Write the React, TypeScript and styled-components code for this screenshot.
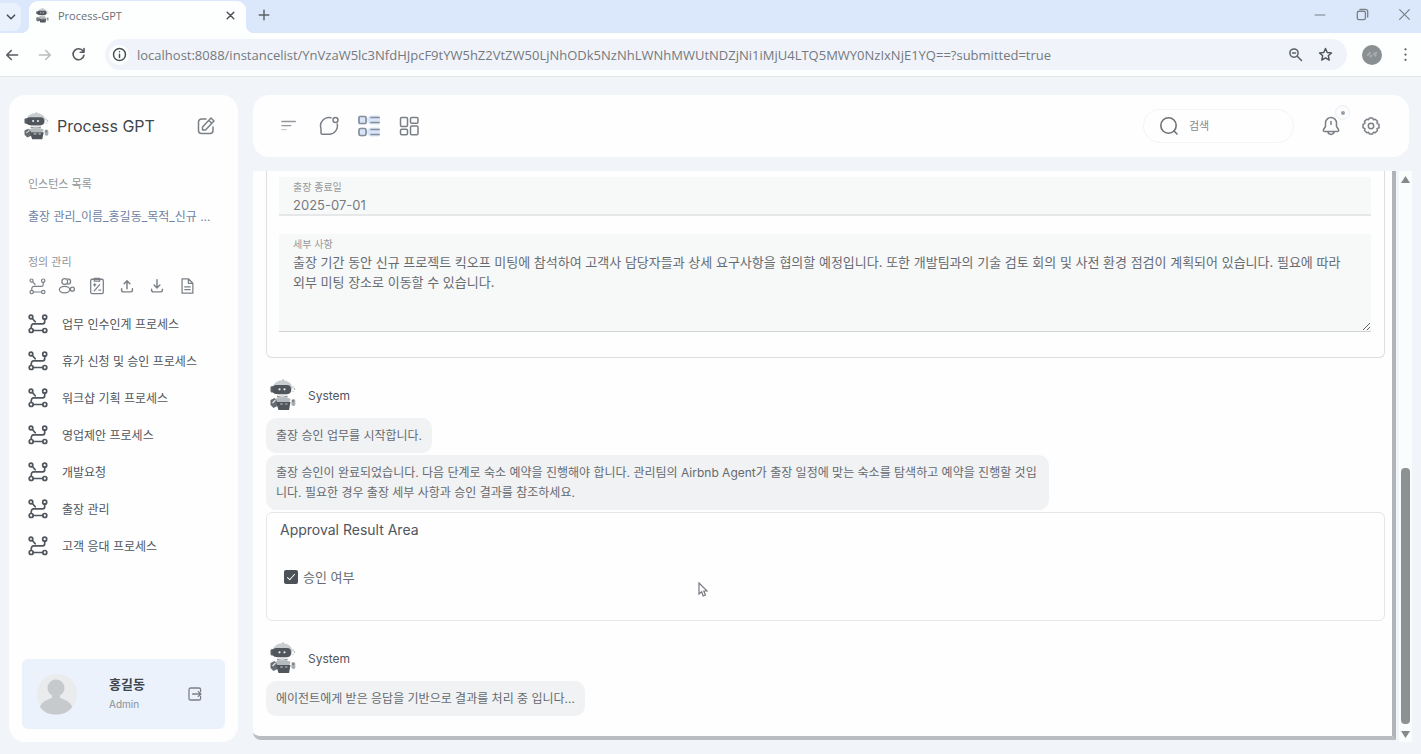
import React from 'react';
import styled, { createGlobalStyle } from 'styled-components';

const GlobalStyle = createGlobalStyle`
  *, *::before, *::after { box-sizing: border-box; }
  body {
    margin: 0;
    background: #f1f4f9;
    color: #50565d;
    font-family: Inter, "Noto Sans CJK KR", sans-serif;
    font-size: 12px;
    overflow: hidden;
  }
  button { border: 0; padding: 0; background: none; color: inherit; font: inherit; }
  a { color: inherit; text-decoration: none; }
  svg { display: block; flex: none; }
`;

const Page = styled.div`
  display: flex;
  flex-direction: column;
  height: 100vh;
`;

/* Browser chrome */

const TabStrip = styled.header`
  display: flex;
  align-items: center;
  height: 33px;
  flex: none;
  padding-right: 10px;
  background: #dbe8fb;
  font-family: "Open Sans", "Noto Sans", sans-serif;
`;

const IconButton = styled.button<{ $size?: number; $color?: string }>`
  display: flex;
  align-items: center;
  justify-content: center;
  flex: none;
  width: ${(p) => p.$size ?? 20}px;
  height: ${(p) => p.$size ?? 20}px;
  color: ${(p) => p.$color ?? '#7b8087'};
`;

const TabSearch = styled(IconButton)`
  width: 21px;
  height: 28px;
  margin-right: 8px;
  border-radius: 0 8px 8px 0;
  background: #e9f1fd;
`;

const Tab = styled.div`
  position: relative;
  display: flex;
  align-items: center;
  align-self: flex-end;
  width: 217px;
  height: 32px;
  padding: 0 6px 4px 7px;
  gap: 9px;
  border-radius: 9px 9px 0 0;
  background: #fdfefe;
  color: #6a6f75;
  font-size: 11px;
  &::before, &::after {
    content: "";
    position: absolute;
    bottom: 0;
    width: 8px;
    height: 8px;
  }
  &::before {
    right: 100%;
    background: radial-gradient(circle at 0 0, transparent 8px, #fdfefe 8px);
  }
  &::after {
    left: 100%;
    background: radial-gradient(circle at 100% 0, transparent 8px, #fdfefe 8px);
  }
`;

const TabTitle = styled.span`
  flex: 1;
`;

const NewTab = styled(IconButton)`
  margin-left: 8px;
  margin-bottom: 4px;
`;

const WindowButtons = styled.div`
  display: flex;
  gap: 22px;
  margin: 0 -3px 4px auto;
`;

const Toolbar = styled.div`
  display: flex;
  align-items: center;
  flex: none;
  height: 44px;
  padding: 0 6px 0 2px;
  gap: 13px;
  background: #fdfefe;
  border-bottom: 1px solid #e3e5e7;
`;

const Address = styled.form`
  display: flex;
  align-items: center;
  flex: 1;
  height: 31px;
  margin-left: 4px;
  padding: 0 12px 0 4px;
  gap: 10px;
  border-radius: 16px;
  background: #f0f4fa;
`;

const SiteInfo = styled(IconButton)`
  border-radius: 50%;
  background: #fdfefe;
  margin-right: -2px;
`;

const UrlInput = styled.input`
  flex: 1;
  min-width: 0;
  padding: 0;
  border: 0;
  outline: 0;
  background: none;
  color: #74797e;
  font: 13px "Open Sans", "Noto Sans", sans-serif;
`;

const Profile = styled.button`
  display: flex;
  align-items: center;
  justify-content: center;
  width: 20px;
  height: 20px;
  margin: 0 0 0 2px;
  border-radius: 50%;
  background: #8a8f91;
  color: #a9adaf;
`;

/* Application shell */

const Shell = styled.div`
  display: flex;
  flex: 1;
  min-height: 0;
  padding: 18px 12px 12px 9px;
  gap: 15px;
`;

const Sidebar = styled.aside`
  display: flex;
  flex-direction: column;
  flex: none;
  width: 229px;
  padding: 13px;
  border-radius: 16px;
  background: #fefefe;
`;

const Brand = styled.div`
  display: flex;
  align-items: center;
  height: 36px;
  padding: 0 9px 0 2px;
  gap: 8px;
`;

const BrandName = styled.h1`
  flex: 1;
  margin: 0;
  color: #3f464d;
  font-size: 16px;
  font-weight: 400;
`;

const SectionLabel = styled.h2<{ $top: number }>`
  margin: ${(p) => p.$top}px 6px 0;
  color: #8f9398;
  font-size: 11px;
  font-weight: 400;
  line-height: 20px;
`;

const InstanceLink = styled.a`
  display: block;
  margin: 13px 6px 0;
  overflow: hidden;
  color: #6e83a3;
  line-height: 20px;
  white-space: nowrap;
`;

const Tools = styled.div`
  display: flex;
  gap: 10px;
  margin: 4px 5px 9px;
`;

const ProcessList = styled.nav`
  display: flex;
  flex-direction: column;
`;

const ProcessLink = styled.a`
  display: flex;
  align-items: center;
  height: 37px;
  padding-left: 6px;
  gap: 14px;
  color: #50565d;
`;

const UserCard = styled.section`
  display: flex;
  align-items: center;
  height: 70px;
  margin-top: auto;
  padding: 0 20px 0 15px;
  border-radius: 6px;
  background: #ebf2fb;
`;

const UserText = styled.div`
  flex: 1;
  padding-left: 32px;
  line-height: 20px;
`;

const UserName = styled.strong`
  display: block;
  color: #3f464d;
  font-size: 13px;
`;

const UserRole = styled.span`
  color: #8a8f96;
  font-size: 10px;
`;

const Main = styled.main`
  display: flex;
  flex-direction: column;
  flex: 1;
  min-width: 0;
  gap: 14px;
`;

const TopBar = styled.div`
  display: flex;
  align-items: center;
  flex: none;
  height: 62px;
  padding: 0 28px 0 26px;
  gap: 20px;
  border-radius: 16px;
  background: #fefefe;
`;

const SearchBox = styled.label`
  display: flex;
  align-items: center;
  width: 151px;
  height: 34px;
  margin-left: auto;
  margin-right: 7px;
  padding: 0 15px;
  gap: 10px;
  border: 1px solid #f3f4f5;
  border-radius: 17px;
  color: #6c7278;
`;

const SearchInput = styled.input`
  flex: 1;
  min-width: 0;
  padding: 0;
  border: 0;
  outline: 0;
  background: none;
  color: #50565d;
  font: inherit;
  font-size: 11px;
  &::placeholder { color: #85898e; opacity: 1; }
`;

const Notice = styled.div`
  position: relative;
`;

const Badge = styled.span`
  position: absolute;
  top: -11px;
  right: -9px;
  display: flex;
  align-items: center;
  justify-content: center;
  width: 15px;
  height: 15px;
  border: 1px solid #eceef1;
  border-radius: 50%;
  background: #fbfcfd;
  &::after {
    content: "";
    width: 4px;
    height: 4px;
    border-radius: 50%;
    background: #979da6;
  }
`;

const ContentRow = styled.div`
  display: flex;
  flex: 1;
  min-height: 0;
  margin-right: -3px;
  gap: 3px;
`;

const Frame = styled.section`
  position: relative;
  flex: 1;
  min-width: 0;
  margin-bottom: 2px;
  padding: 0 7px 0 13px;
  overflow: hidden;
  border-right: 4px solid #b0b4b8;
  border-bottom: 4px solid #b9bdc0;
  border-bottom-left-radius: 8px;
  background: #fefefe;
`;

const FormCard = styled.div`
  padding: 6px 13px 25px 12px;
  border: 1px solid #dcdfe0;
  border-top: 0;
  border-radius: 0 0 6px 6px;
`;

const Field = styled.label<{ $gap?: number }>`
  display: flex;
  flex-direction: column;
  margin-top: ${(p) => p.$gap ?? 0}px;
  background: #f7f8f8;
`;

const FieldLabel = styled.span`
  padding: 2px 14px 0;
  color: #94989c;
  font-size: 10px;
  line-height: 16px;
`;

const TextInput = styled.input`
  height: 21px;
  padding: 0 14px;
  border: 0;
  border-bottom: 2px solid #e5e7e8;
  outline: 0;
  background: none;
  color: #767b81;
  font: inherit;
  font-size: 13px;
`;

const TextArea = styled.textarea`
  height: 80px;
  padding: 0 14px;
  border: 0;
  border-bottom: 1px solid #cfd3d4;
  outline: 0;
  background: none;
  color: #666b71;
  font: inherit;
  font-size: 13px;
  line-height: 20px;
  word-break: keep-all;
  resize: vertical;
`;

const Sender = styled.div`
  display: flex;
  align-items: center;
  height: 32px;
  margin: 21px 0 7px 4px;
  gap: 12px;
  color: #50565d;
`;

const Bubble = styled.p`
  width: fit-content;
  max-width: 70%;
  margin: 0 0 2px;
  padding: 8px 10px 7px;
  border-radius: 10px;
  background: #f1f2f3;
  color: #656a70;
  line-height: 20px;
`;

const ApprovalCard = styled.section`
  height: 109px;
  padding: 7px 13px;
  border: 1px solid #e4e7e8;
  border-radius: 6px;
`;

const CardTitle = styled.h3`
  margin: 0 0 27px;
  color: #50565d;
  font-size: 14px;
  font-weight: 400;
  line-height: 20px;
`;

const CheckLabel = styled.label`
  display: flex;
  align-items: center;
  margin-left: 4px;
  gap: 5px;
  color: #666b71;
  font-size: 13px;
  line-height: 20px;
`;

const CheckBox = styled.input`
  width: 14px;
  height: 14px;
  margin: 0;
  appearance: none;
  border-radius: 2px;
  background: #4c5258;
  position: relative;
  &:checked::after {
    content: "";
    position: absolute;
    left: 5px;
    top: 2px;
    width: 4px;
    height: 8px;
    border: solid #fefefe;
    border-width: 0 1px 1px 0;
    transform: rotate(42deg);
  }
`;

const ScrollTrack = styled.div`
  display: flex;
  flex-direction: column;
  align-items: center;
  justify-content: space-between;
  width: 13px;
  flex: none;
  padding: 5px 0 4px;
  background: #fbfcfc;
`;

const ScrollRail = styled.div`
  display: flex;
  flex: 1;
  align-items: flex-end;
  padding: 7px 0;
`;

const ScrollThumb = styled.div`
  width: 9px;
  height: 48%;
  border-radius: 4px;
  background: #8c9193;
`;

const Pointer = styled.svg`
  position: absolute;
  left: 39%;
  top: 411px;
`;

/* Drawings */

type DrawingProps = {
  size?: number;
  width?: number;
  box?: number;
  children: React.ReactNode;
};

function Icon({ size = 18, width = 1.4, box = 20, children }: DrawingProps) {
  return (
    <svg
      width={size}
      height={size}
      viewBox={`0 0 ${box} ${box}`}
      fill="none"
      stroke="currentColor"
      strokeWidth={width}
      strokeLinecap="round"
      strokeLinejoin="round"
      aria-hidden="true"
    >
      {children}
    </svg>
  );
}

function Robot({ width = 28, height = 32 }: { width?: number; height?: number }) {
  return (
    <svg width={width} height={height} viewBox="0 0 26 32" preserveAspectRatio="none" aria-hidden="true">
      <path d="M13 0.500V3" stroke="#9a9fa3" strokeWidth="1.400" />
      <ellipse cx="12.500" cy="9" rx="9.800" ry="7.800" fill="#c9cdd0" />
      <rect x="0.500" y="7" width="3.500" height="6.500" rx="1.600" fill="#5b6167" />
      <rect x="2.500" y="6" width="18.500" height="9" rx="3.800" fill="#50565c" />
      <circle cx="9.500" cy="10.300" r="1.100" fill="#e9ecee" />
      <circle cx="14.500" cy="10.300" r="1.100" fill="#e9ecee" />
      <path d="M7 16.500c3 1.500 7.600 1.500 10.500 0v2H7z" fill="#8c9196" />
      <path d="M23 7.500v1.500M24.500 9v2M23 12v1" stroke="#b6babd" strokeWidth="1.200" />
      <path d="M5 20c3-2 13-2 15.500 0l-1 3H6z" fill="#b5babd" />
      <path d="M0.500 21l4-2 2.500 3 .5 5-4 2-3-3z" fill="#676d72" />
      <path d="M2.500 24l3-3" stroke="#dfe2e4" strokeWidth="1.200" />
      <path d="M6 23h14.500l-1.500 8H8.500z" fill="#50565b" />
      <path d="M10 25h3M15 25h2.500" stroke="#b8bcbf" strokeWidth="1.200" />
      <rect x="21.500" y="20" width="3.800" height="7" rx="1.800" fill="#a6abae" />
      <path d="M23 21v2" stroke="#666c71" strokeWidth="1.200" />
    </svg>
  );
}

function Route({ size = 20, width = 1.7 }: { size?: number; width?: number }) {
  return (
    <Icon size={size} width={width}>
      <circle cx="3" cy="3" r="1.800" />
      <path d="M4.400 4.500l2.800 3.300" />
      <circle cx="16.700" cy="3.200" r="2" />
      <path d="M16.700 5.200V7.800a2 2 0 0 1-2 2H5.800C3.800 9.800 3.200 11.200 3.200 14" />
      <circle cx="3.200" cy="16.500" r="2" />
      <circle cx="16.800" cy="16.500" r="2" />
      <path d="M5.200 16.500h9.600" />
    </Icon>
  );
}

const processes = [
  '업무 인수인계 프로세스',
  '휴가 신청 및 승인 프로세스',
  '워크샵 기획 프로세스',
  '영업제안 프로세스',
  '개발요청',
  '출장 관리',
  '고객 응대 프로세스',
];

const tools = [
  { name: '프로세스', icon: <Route size={17} width={1.4} /> },
  {
    name: '조직',
    icon: (
      <Icon>
        <circle cx="7.500" cy="5" r="3.200" />
        <path d="M11 2a3 3 0 1 1 0 6" />
        <ellipse cx="7.300" cy="14" rx="5.800" ry="3.700" />
        <circle cx="16" cy="13.500" r="2.200" />
      </Icon>
    ),
  },
  {
    name: '규칙',
    icon: (
      <Icon>
        <rect x="3" y="2.500" width="14" height="16" rx="1.500" />
        <path d="M7 4.500v-3h6v3zM7 15.500l6-7M7.500 7.500v2.500M6.200 8.700h2.500M12 14.500h2" />
      </Icon>
    ),
  },
  {
    name: '업로드',
    icon: (
      <Icon width={1.6}>
        <path d="M10 13V4.500M6.800 7.500L10 4.300l3.200 3.200M4 13v1.800A1.700 1.700 0 0 0 5.700 16.500h8.600a1.700 1.700 0 0 0 1.700-1.700V13" />
      </Icon>
    ),
  },
  {
    name: '다운로드',
    icon: (
      <Icon width={1.6}>
        <path d="M10 3v9M6.800 9L10 12.200 13.200 9M4 13.500v1.300A1.700 1.700 0 0 0 5.700 16.500h8.600a1.700 1.700 0 0 0 1.700-1.700v-1.300" />
      </Icon>
    ),
  },
  {
    name: '문서',
    icon: (
      <Icon>
        <path d="M4.500 2h7L16.500 7v11h-12zM11.500 2v5h5M7.500 11h6M7.500 14h6" />
      </Icon>
    ),
  },
];

const details =
  '출장 기간 동안 신규 프로젝트 킥오프 미팅에 참석하여 고객사 담당자들과 상세 요구사항을 협의할 예정입니다. 또한 개발팀과의 기술 검토 회의 및 사전 환경 점검이 계획되어 있습니다. 필요에 따라 외부 미팅 장소로 이동할 수 있습니다.';

function SystemHeader() {
  return (
    <Sender>
      <Robot width={26} />
      System
    </Sender>
  );
}

function BrowserChrome() {
  return (
    <>
      <TabStrip>
        <TabSearch aria-label="탭 검색" $color="#4a4f55">
          <Icon size={12} width={2.6}><path d="M4 7l6 6 6-6" /></Icon>
        </TabSearch>
        <Tab>
          <Robot width={13} height={15} />
          <TabTitle>Process-GPT</TabTitle>
          <IconButton aria-label="탭 닫기" $color="#4a4f55">
            <Icon size={11} width={2.600}><path d="M4 4l12 12M16 4L4 16" /></Icon>
          </IconButton>
        </Tab>
        <NewTab aria-label="새 탭" $color="#5b6066">
          <Icon size={12} width={2.400}><path d="M10 2v16M2 10h16" /></Icon>
        </NewTab>
        <WindowButtons>
          <IconButton aria-label="최소화"><Icon size={12} width={2}><path d="M2 10h16" /></Icon></IconButton>
          <IconButton aria-label="이전 크기로">
            <Icon size={13} width={2}>
              <rect x="2" y="5" width="12.500" height="13" rx="2.500" />
              <path d="M6 2h8.500A3.500 3.500 0 0 1 18 5.500V14" />
            </Icon>
          </IconButton>
          <IconButton aria-label="닫기"><Icon size={13} width={1.800}><path d="M2.500 2.500l15 15M17.500 2.500l-15 15" /></Icon></IconButton>
        </WindowButtons>
      </TabStrip>
      <Toolbar>
        <IconButton aria-label="뒤로" $color="#575c62">
          <Icon size={14} width={2.200}><path d="M18 10H3M9 3.500L2.500 10 9 16.500" /></Icon>
        </IconButton>
        <IconButton aria-label="앞으로" $color="#b9bcc0">
          <Icon size={14} width={2.200}><path d="M2 10h15M11 3.500l6.500 6.500-6.500 6.500" /></Icon>
        </IconButton>
        <IconButton aria-label="새로고침" $color="#575c62">
          <Icon size={15} width={2.200}><path d="M16.200 5.600A7.300 7.300 0 1 0 17.300 11M17.300 2v5h-5" /></Icon>
        </IconButton>
        <Address onSubmit={(e) => e.preventDefault()}>
          <SiteInfo type="button" aria-label="사이트 정보" $color="#4a4f55">
            <Icon size={15} width={2}><circle cx="10" cy="10" r="8" /><path d="M10 9.500V14M10 6.200v.2" /></Icon>
          </SiteInfo>
          <UrlInput
            aria-label="주소"
            defaultValue="localhost:8088/instancelist/YnVzaW5lc3NfdHJpcF9tYW5hZ2VtZW50LjNhODk5NzNhLWNhMWUtNDZjNi1iMjU4LTQ5MWY0NzIxNjE1YQ==?submitted=true"
          />
          <IconButton type="button" aria-label="확대/축소" $color="#5b6066">
            <Icon size={15} width={2}><circle cx="8" cy="8" r="5.500" /><path d="M12.300 12.300L18 18M6 8h4" /></Icon>
          </IconButton>
          <IconButton type="button" aria-label="북마크" $color="#4f5459">
            <Icon size={15} width={1.900}><path d="M10 2l2.300 5.300 5.700.5-4.300 3.800 1.300 5.900-5-3.100-5 3.100 1.300-5.900L2 7.800l5.700-.5z" /></Icon>
          </IconButton>
        </Address>
        <Profile aria-label="프로필">
          <Icon size={14} width={3}><path d="M4 10l3-3M8 12l1-1M13 8l2 3M16 7v.2" /></Icon>
        </Profile>
        <IconButton aria-label="메뉴" $color="#5b6066">
          <Icon size={15} width={3}><path d="M10 3v.1M10 10v.1M10 17v.1" /></Icon>
        </IconButton>
      </Toolbar>
    </>
  );
}

export default function App() {
  return (
    <Page>
      <GlobalStyle />
      <BrowserChrome />
      <Shell>
        <Sidebar>
          <Brand>
            <Robot width={25} height={28} />
            <BrandName>Process GPT</BrandName>
            <IconButton aria-label="새 대화">
              <Icon size={20} width={1.500}>
                <path d="M10 3H5.500A3 3 0 0 0 2.500 6v8.500a3 3 0 0 0 3 3H14a3 3 0 0 0 3-3V11M15 2l3 3-8.500 9H6.500v-3z M13 4.500l2.500 2.500" />
              </Icon>
            </IconButton>
          </Brand>
          <SectionLabel $top={30}>인스턴스 목록</SectionLabel>
          <InstanceLink href="#instance">출장 관리_이름_홍길동_목적_신규 ...</InstanceLink>
          <SectionLabel $top={25}>정의 관리</SectionLabel>
          <Tools>
            {tools.map((t) => (
              <IconButton key={t.name} aria-label={t.name}>{t.icon}</IconButton>
            ))}
          </Tools>
          <ProcessList>
            {processes.map((name) => (
              <ProcessLink key={name} href="#process">
                <Route />
                {name}
              </ProcessLink>
            ))}
          </ProcessList>
          <UserCard>
            <svg width="40" height="44" viewBox="0 0 40 44" aria-hidden="true">
              <circle cx="20" cy="22" r="20" fill="#e9ebed" />
              <circle cx="19" cy="16" r="8.500" fill="#c7cacc" />
              <path d="M15 22h8v4c7 2 11 5 12 9-3 5-9 7.500-16 7.500S6 40 3 35c1-4 5-7 12-9z" fill="#c7cacc" />
            </svg>
            <UserText>
              <UserName>홍길동</UserName>
              <UserRole>Admin</UserRole>
            </UserText>
            <IconButton aria-label="로그아웃">
              <Icon size={16} width={1.600}>
                <path d="M17 7V4.500A2 2 0 0 0 15 2.500H4.500a2 2 0 0 0-2 2v11a2 2 0 0 0 2 2H15a2 2 0 0 0 2-2V13M7 10h10.500M14 7l3.500 3-3.500 3" />
              </Icon>
            </IconButton>
          </UserCard>
        </Sidebar>
        <Main>
          <TopBar>
            <IconButton aria-label="메뉴 접기" $color="#94989c">
              <Icon size={18} width={1.500}>
                <path d="M2 5h15" />
                <path d="M2 9.500h10" />
                <path d="M2 14h5" stroke="#c9cccf" />
              </Icon>
            </IconButton>
            <IconButton aria-label="채팅">
              <Icon size={20} width={1.500}>
                <path d="M12 1.800A8.300 8.300 0 0 0 2 12.500V17a1.200 1.200 0 0 0 1.200 1.200H10A8.300 8.300 0 0 0 18.200 8" />
                <circle cx="16.500" cy="4" r="2.500" />
              </Icon>
            </IconButton>
            <IconButton aria-label="할 일" $color="#868f9b">
              <Icon size={22} width={1.700} box={22}>
                <path d="M4.500 5h0M4.500 17h0M13.500 5h6M13.500 17h6" stroke="#d9e6fa" strokeWidth="9" />
                <rect x="1" y="1.500" width="7" height="7" rx="1" />
                <rect x="1" y="13.500" width="7" height="7" rx="1.500" />
                <path d="M13 2.500h8M13 7.500h8M13 14.500h8M13 19.500h8" />
              </Icon>
            </IconButton>
            <IconButton aria-label="대시보드">
              <Icon size={20} width={1.500}>
                <rect x="1.500" y="1.500" width="7" height="9" rx="1.200" />
                <rect x="11.500" y="1.500" width="7.500" height="5.800" rx="1.200" />
                <rect x="1.500" y="13.200" width="7" height="5.500" rx="1.200" />
                <rect x="11.500" y="10" width="7.500" height="8.700" rx="1.200" />
              </Icon>
            </IconButton>
            <SearchBox>
              <Icon size={20} width={1.600}><circle cx="9.500" cy="9.500" r="7.700" /><path d="M15 15l3 3" /></Icon>
              <SearchInput placeholder="검색" aria-label="검색" />
            </SearchBox>
            <Notice>
              <IconButton aria-label="알림">
                <Icon size={20} width={1.500}>
                  <path d="M10 1.500A5.500 5.500 0 0 0 4.500 7v3.500L2.500 13.500c-.5 1.200 0 2 1.200 2h12.600c1.200 0 1.700-.8 1.200-2L15.500 10.500V7A5.500 5.500 0 0 0 10 1.500zM6.800 15.700c.6 3.600 5.800 3.600 6.400 0M10 5.500V8.500" />
                </Icon>
              </IconButton>
              <Badge />
            </Notice>
            <IconButton aria-label="설정">
              <Icon size={20} width={1.500}>
                <circle cx="10" cy="10" r="2.700" />
                <path d="M8.400 2h3.200l.8 1.700 1.800-.5 2.300 2.200-.5 1.900 2 1v3.400l-2 .9.500 1.900-2.300 2.200-1.800-.5-.8 1.800H8.400l-.8-1.800-1.800.5-2.300-2.200.5-1.900-2-.9V8.300l2-1-.5-1.900 2.300-2.200 1.800.5z" />
              </Icon>
            </IconButton>
          </TopBar>
          <ContentRow>
            <Frame>
              <FormCard>
                <Field>
                  <FieldLabel>출장 종료일</FieldLabel>
                  <TextInput readOnly value="2025-07-01" />
                </Field>
                <Field $gap={18}>
                  <FieldLabel>세부 사항</FieldLabel>
                  <TextArea readOnly value={details} />
                </Field>
              </FormCard>
              <SystemHeader />
              <Bubble>출장 승인 업무를 시작합니다.</Bubble>
              <Bubble>
                출장 승인이 완료되었습니다. 다음 단계로 숙소 예약을 진행해야 합니다. 관리팀의 Airbnb Agent가 출장 일정에 맞는 숙소를 탐색하고 예약을 진행할 것입니다. 필요한 경우 출장 세부 사항과 승인 결과를 참조하세요.
              </Bubble>
              <ApprovalCard>
                <CardTitle>Approval Result Area</CardTitle>
                <CheckLabel>
                  <CheckBox type="checkbox" defaultChecked />
                  승인 여부
                </CheckLabel>
              </ApprovalCard>
              <SystemHeader />
              <Bubble>에이전트에게 받은 응답을 기반으로 결과를 처리 중 입니다...</Bubble>
              <Pointer width="11" height="16" viewBox="0 0 11 16" aria-hidden="true">
                <path d="M2 1v11l2.600-2.300L6.200 14l2.200-1L6.800 9h3.400z" fill="#fefefe" stroke="#747a80" strokeWidth="1.200" />
              </Pointer>
            </Frame>
            <ScrollTrack>
              <svg width="9" height="7" viewBox="0 0 9 7" aria-hidden="true"><path d="M4.500 0L9 7H0z" fill="#85898c" /></svg>
              <ScrollRail><ScrollThumb /></ScrollRail>
              <svg width="9" height="7" viewBox="0 0 9 7" aria-hidden="true"><path d="M4.500 7L9 0H0z" fill="#85898c" /></svg>
            </ScrollTrack>
          </ContentRow>
        </Main>
      </Shell>
    </Page>
  );
}
